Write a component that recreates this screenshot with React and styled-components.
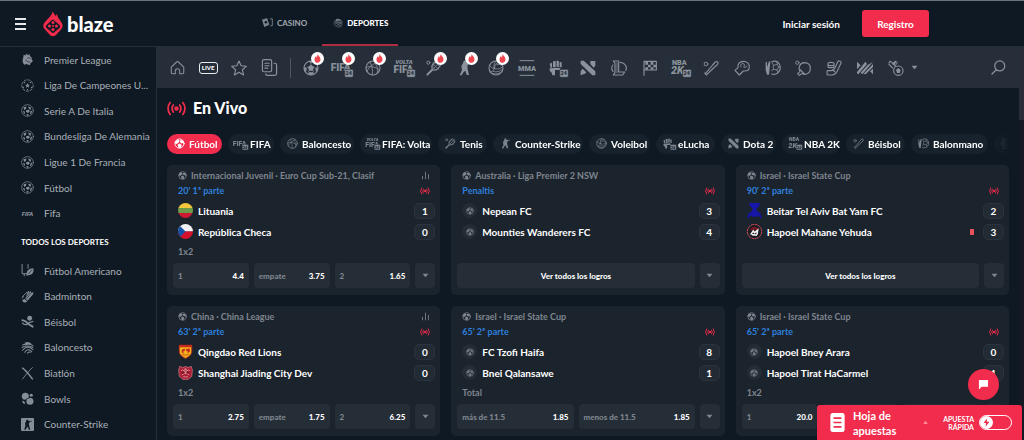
import React from "react";
import styled, { createGlobalStyle, css } from "styled-components";

const c = {
  bg: "#0f1923",
  bar: "#252e39",
  card: "#1b232d",
  tile: "#252d37",
  line: "#252f38",
  red: "#f12c4c",
  icon: "#8a929b",
  muted: "#7f868f",
  side: "#a9b0b8",
  blue: "#2f80dc",
};

const GlobalStyle = createGlobalStyle`
  *, *::before, *::after { box-sizing: border-box; }
  html, body { margin: 0; background: ${c.bg}; }
  body { font-family: Lato, "Open Sans", sans-serif; font-size: 10px; color: #fff; overflow: hidden; }
  button { font: inherit; color: inherit; border: 0; padding: 0; background: none; cursor: pointer; }
  a { color: inherit; text-decoration: none; }
  ul { list-style: none; margin: 0; padding: 0; }
  h1, h2, p { margin: 0; }
  svg { display: block; flex: none; overflow: visible; }
`;

/* ---------- icons ---------- */

const Icon = ({ name, size = 16, color }) => (
  <svg width={size} height={size} viewBox="0 0 24 24" fill="none" stroke="currentColor" strokeWidth="1.7"
    strokeLinecap="round" strokeLinejoin="round" style={color ? { color } : undefined} aria-hidden="true">
    {drawings[name]}
  </svg>
);

const F = { fill: "currentColor", stroke: "none" };
const glyph = { fill: "currentColor", stroke: "none", fontFamily: "Roboto, sans-serif", fontWeight: 900, textAnchor: "middle" };

const tag24 = (
  <>
    <rect x="16" y="14" width="13" height="12" rx="2" {...F} stroke="#252e39" strokeWidth="1" />
    <text x="22" y="23" {...glyph} fontSize="8" style={{ fill: "#252e39" }}>24</text>
  </>
);

const drawings = {
  home: <path d="M2 11.500 11 2.800q1-.9 2 0l9 8.700V20q0 2-2 2h-4.500v-4.500a3.500 3.500 0 0 0-7 0V22H4q-2 0-2-2z" />,
  star: <path d="m12 1.500 3.200 7.200 7.800.8-5.900 5.200 1.700 7.700L12 18.400l-6.800 4 1.700-7.700L1 9.500l7.800-.8z" />,
  copy: <><path d="M4 1h9q2 0 2 2v13q0 2-2 2H4q-2 0-2-2V3q0-2 2-2z" /><path d="M18.500 6h1q2.500 0 2.500 2.500V20q0 3-3 3H9q-2 0-2.500-1.800" /><path d="M5.500 6h6M5.500 9.500h6M5.500 13h4" /></>,
  soccer: <><circle cx="12" cy="12" r="10.500" /><path {...F} d="m12 7.200 4.600 3.400-1.700 5.400H9.100L7.400 10.600zM8 2.200l4 2.600 4-2.600-4-.9zM1.400 10l4 2-.4 5-2.500-.5zM22.600 10l-4 2 .4 5 2.500-.5zM8.500 21.900l-.3-3.600H12h3.800l-.3 3.600L12 22.700z" /><path strokeWidth="1" d="M12 7.200V4.800M16.600 10.600l2 1.400M14.900 16l1 2.300M9.100 16l-1 2.300M7.400 10.600l-2 1.400" /></>,
  ball: <><circle cx="12" cy="12" r="10" strokeWidth="2" /><path {...F} d="M2 8 8 3l4 2-1 4-5 4-4-1zM13 5l6 0 3 5-5 2-4-3zM8 14l5-2 4 4-2 5-5 1z" /></>,
  league: <><circle cx="12" cy="12" r="10.800" strokeWidth="1.300" /><path {...F} d="m5 6 5-1.500L9 9 5.500 11zM13 4.500l5 1.500.5 4.500L15 9zM10 11l5-.5 1 4-3.500 2L9 14zM3.500 13l3.500 1 .5 4-2-.5zM17.500 13.500l3-1.500-1 5-3 2zM10 18.500l4 .5-.5 2.500h-2.500z" /></>,
  premier: <><path {...F} d="m5 3 3 1.800L10 1l2.200 3L16 2l.3 3.600c3 1.400 4 3.800 3.700 7.400l2 1-2 3.500-2.500.5-1 4.500-6.500-2-4 1C3 18 2 14 4 9z" /><path stroke="#0f1923" strokeWidth="1.200" d="M12 9.500c2-1 3.500-.8 5 .5M9 13c1 3 4 4 7 3.500" /></>,
  champions: <><circle cx="12" cy="12" r="10.500" strokeWidth="1.500" strokeDasharray="4 3" /><path {...F} d="m12 7.500 1.300 3 3.200.2-2.400 2.200.8 3.300-2.900-1.700-2.900 1.700.8-3.300-2.400-2.200 3.200-.2zM5 5l3.500.5L6 8.500zM19 5l-3.500.5L18 8.500zM3 14l3 1-1.500 3zM21 14l-3 1 1.500 3zM10.500 18.500h3L12 21.500z" /></>,
  basket: <><circle cx="12" cy="12" r="10.500" /><path d="M7 3c3.500 5 5 12 4 19.500M18 3.500C10 7 4.500 12 3 17.500M1.500 11c7-2.500 15-1 20 4.500M15 5.500c4 4 5 9 3 14" strokeWidth="1.300" /></>,
  basketSolid: <><path {...F} d="M7 3q8-4 14 4-7-3-14 0z" /><g strokeWidth="1.900"><path d="M3 7.500c2-2 4-1 6-.5M2 12c6-4 13-3 20 0M3 17c5-7 12-7 19-1M7 21c2-6 8-7 13-1M12 22.500c1-2 3-2.500 5-1.500M10 6c5-.5 9 0 12 2.500" /></g></>,
  fifa: <><text x="10" y="17" {...glyph} fontSize="15">FIFA</text>{tag24}</>,
  volta: <><text x="12" y="6" {...glyph} fontSize="9" fontStyle="italic">VOLTA</text><text x="11" y="19" {...glyph} fontSize="15">FIFA</text>{tag24}</>,
  fifaSmall: <text x="12" y="16" {...glyph} fontSize="11" fontStyle="italic">FIFA</text>,
  tennis: <><circle cx="3.500" cy="4" r="2.300" strokeWidth="1.400" /><path d="M9.500 14.500C7 10 10 4 15 2.500c4-1 7 2 6 6-1.500 5-7 8-11.500 6z" /><path strokeWidth="1" d="m11 7 8 7M14 4l7 6M9 10l6 5M20 4 9.500 14.500M15.500 3 9 10M22 8l-7 7" /><path strokeWidth="3" d="m9 15-7 7" /></>,
  cs: <path {...F} d="M10 1h3.500l1 3.500L22 4v1.500h-4L15.500 9l.5 5 2 8.500h-3.500L12.500 16 10 18l-3 5H4l3.500-8-1-6L9 5z" />,
  volley: <><circle cx="12" cy="12" r="10.500" /><path strokeWidth="1.300" d="M12 1.500C9 5 8 9 9.500 12.500M17 3c-4 1-7 4-7.500 9M9.500 12.500C5 12 2.500 9.500 2 7.500M9.500 12.500c-1 4-4 6-6.500 5.500M9.500 12.500c4 2 9 1 13-2.500M8 17c5 2 10 0 13.500-3M6 20c5 2 9 1 12-1M13.500 7c3-1 6 0 8 1.500" /></>,
  mma: <><path strokeWidth="1.500" strokeLinecap="butt" d="M1 1h22M1 23h22" /><text x="12" y="16" {...glyph} fontSize="11">MMA</text></>,
  fist: <><path {...F} d="M1 5.500 4.500 4v7.500H2.500zM6 2l4-.5V11H6zM11.300 1l3.500.5V10h-3.500zM16 3l3 .5V11l-3-.5zM1 12.500l14-1 4 2.500-4 1H9v8H5l-1-4-3-3z" />{tag24}</>,
  dota: <path {...F} d="M1 1h4.500L23 17v6h-4.500L1 6zM1 17l3-4 5 5v2l-8 3zM15.500 1.500H23v7l-2.500 3-5-5.500z" />,
  lol: <><path d="M3.500 1.500h8v16.500h9L17.500 22.500h-14L6 18.500V5z" /><path d="M9 4v15" strokeWidth="1.200" /><path d="M14 3.500c5 .5 9 4 9 9 0 1.200-.3 2.300-.8 3.200M2.800 7.500C.5 11 .8 14.500 3 17" /></>,
  flag: <><path d="M3 23V2M3 2h18.500v13H3" /><path {...F} d="M5 3h4v4H5zM13 3h4v4h-4zM9 7h4v4H9zM17 7h4v4h-4zM5 11h4v3.500H5zM13 11h4v3.500h-4z" /></>,
  nba: <><text x="11" y="7.500" {...glyph} fontSize="11">NBA</text><text x="8" y="21" {...glyph} fontSize="16" fontStyle="italic">2K</text>{tag24}</>,
  bat: <><circle cx="4.500" cy="6" r="2.800" strokeWidth="1.400" /><path d="M4 20 14.500 7.500l4-4.500q2-1.500 3.500 0t0 3.500l-4.500 4L6 21.500M2.500 19.500l3 3" /></>,
  glove: <><path d="M1.500 15.500 6 11.500C5 6 8.500 2 14 2c5.500 0 9 3.500 9 8 0 4-3 6.500-7 6.500h-2L8 22.500z" /><path d="M10.500 10.500c-2-4 2-6.500 4.500-4.500q2 2-.5 4.500c2 1.500 4.500.5 5-1.500" strokeWidth="1.400" /></>,
  handball: <><path d="M10 3c7-4 13 2 13 8.500S17 23 10 21" /><path strokeWidth="1.200" d="m13 8 5-1.500 2.500 4-2.500 4.500-5-1zM13 8l-2-3M18 6.500l.5-4M20.500 10.500H23M18 15l1.500 4M13 14l-3 2" /><path {...F} d="M1 3.500 3 3v8l3-9 2 .5L6 22H3L1 15z" /></>,
  pingpong: <><circle cx="3.500" cy="4" r="2.500" strokeWidth="1.400" /><path d="M7.500 17.500C4 12 7 4.500 14 4c6 0 9 4 9 9 0 6-5 9-10 8.500L10.500 20l-4 3-2.500-2.500z" /><path d="M7.500 14 14 21" /></>,
  cricket: <><path d="M3 5c0-2 9-2 9 0v5c0 2-9 2-9 0zM3 7.500c2 1.200 7 1.200 9 0" /><path d="M20 1.500q3 .5 2.500 3l-5 11c-2 5-5 7-9 7H3q-2-.5-1.500-3.500L2 16h6c3 0 5-3 6-5l3.500-8q1-2 2.500-1.500zM10.500 15l3 3" /></>,
  masks: <path {...F} d="M0 2.500 5.500 8 0 14zM7.500 9 12.500 2.500 15 6 2 21.500 0 20v-2zM16 7.500 24 2.500 8 21.500 5.500 19zM24 6v4.500L13 21.500l-3-1zM24 13v8.500L19.500 17z" />,
  mixed: <><path d="m2 3 2-1 7 7M2 7l5 5M11 2 7 6M9 7l3-5" /><path d="m2 3-.5 4M14 3l-3 6" strokeWidth="1.300" /><circle cx="15.500" cy="16" r="7" /><path {...F} d="m15.500 12 3.500 3-1.500 4.500h-4L12 15z" /></>,
  search: <><circle cx="14" cy="9.500" r="8" strokeWidth="2" /><path strokeWidth="2" d="M8.500 15.500 1.500 22.500" /></>,
  bowls: <><circle cx="8" cy="8" r="6.500" {...F} /><circle cx="16.500" cy="17" r="6.500" {...F} /><circle cx="19" cy="6" r="3" {...F} /><path stroke="#0f1923" d="M4 17c3 3 4-4 8-5s5-3 9-3" strokeWidth="1.500" /><path {...F} d="m2 16 4 1 2 5-4-1z" /></>,
  american: <><path strokeWidth="1.800" d="M2 1v17h8M13 1v7" /><path {...F} d="M23 8c1 9-3 13-13 13.500C9.500 13 14 8.500 23 8z" /><path stroke="#0f1923" strokeWidth="1.200" d="m14 18 6-7" /><path d="M6 18v4" /></>,
  badminton: <><path {...F} d="M13 1.500 16 4l2-2.500L19 5l4-1-1 4.500L12 20l-4-4zM7 16.500l4.500 4.500c-2 2.500-6 2.500-8 .5s-1-4.500 3.500-5z" /><path stroke="#0f1923" strokeWidth="1" d="m10 17 9-12M8 15l8-10" /><path d="M3 12 11 4M2 15l3-3" /></>,
  baseball: <><circle cx="16" cy="6" r="4.500" {...F} /><path strokeWidth="3.500" d="M2.500 9.500c5 1 8 2.500 11 7l8 5" /><path d="M3 15c3 4 8 4 12-1l7-2" strokeWidth="2.400" /></>,
  biathlon: <><path strokeWidth="2.600" d="M3 2c7 5 11 11 18 20" /><path strokeWidth="1.600" d="M21 1C14 8 9 14 3 22" /></>,
  csBox: <><rect x="0" y="0" width="24" height="24" rx="2" {...F} /><path fill="#0f1923" stroke="none" d="M10 3h3l1 2.500 6-.5v1.500h-3L14.500 10l.5 4 2 7.500h-2.500L12.500 16l-2 2-2 3.500H6l2-7-.5-5L9.500 6z" /></>,
  cards: <><path {...F} d="m0 6 11-4 5 15-11 5z" /><circle cx="8.500" cy="11.500" r="2.800" fill="#0f1923" stroke="none" /><path d="M18 4h4.500v15h-3.500" strokeWidth="2" /></>,
  live: <><circle cx="12" cy="12" r="2.800" {...F} /><path strokeWidth="2.200" d="M8 7.500q-3 4.500 0 9M16 7.500q3 4.500 0 9M4 4.500Q-1.500 12 4 19.500M20 4.500q5.500 7.500 0 15" /></>,
  chart: <path strokeWidth="2.200" d="M4 14v7M12 3v18M20 9v12" />,
  caret: <path {...F} d="M2 6h20L12 18z" />,
  caretUp: <path {...F} d="M1 19h22L12 4z" />,
  flame: <path {...F} d="M11.500 0c1.500 4 8.500 7 8.500 14 0 5.500-3.500 9.500-8 9.500s-8-4-8-8.500c0-4 2-6.500 4-9.500 1 1.500 1.500 2.500 1.500 4.500C11 7 12.500 5 11.500 0z" />,
  chat: <path {...F} d="M2 2h20v15H8l-6 6z" />,
  bolt: <path {...F} d="M13.500 1 4 13.500h6.500L9.500 23 20 10h-7z" />,
  sheet: <><rect x="3" y="0" width="18" height="24" rx="3" {...F} /><path stroke="#f12c4c" strokeWidth="2" strokeLinecap="butt" d="M7 6.500h10M7 12h10M7 17.500h10" /></>,
};

const Crests = {
  lithuania: <><clipPath id="lt"><circle cx="12" cy="12" r="12" /></clipPath><g clipPath="url(#lt)"><path fill="#f4c83c" d="M0 0h24v8H0z" /><path fill="#6f9a48" d="M0 8h24v8H0z" /><path fill="#cf1831" d="M0 16h24v8H0z" /></g></>,
  czech: <><clipPath id="cz"><circle cx="12" cy="12" r="12" /></clipPath><g clipPath="url(#cz)"><path fill="#f2f2f4" d="M0 0h24v12H0z" /><path fill="#d3112b" d="M0 12h24v12H0z" /><path fill="#1450a4" d="M0 0l12 12L0 24z" /></g></>,
  qingdao: <><path fill="#f0b51c" stroke="#b3261e" strokeWidth="1.500" d="M2 2h20v9c0 6-4 9-10 12C6 20 2 17 2 11z" /><path fill="#c9281f" d="M2 1.500h20V5H2zM6 9l5-2v4l-3 1 2 4-4-3zM13 8l6-1v5l-4 3 1-3-3-1z" /><path stroke="#c9281f" d="M6 17c4 1 8 1 12-1" fill="none" /></>,
  shanghai: <><path fill="#a91d35" stroke="#d88a93" strokeWidth="1" d="m3 2 4 2q5-3 10 0l4-2 2 6-1 10-6 5H8l-6-5L1 8z" /><path fill="none" stroke="#e0a0a4" strokeWidth="1.300" d="M5 9q3-3 5 1M19 9q-3-3-5 1M6 16q6-5 12 0M8 19h8M11 6h2v6h-2z" /><path fill="#5f0f22" d="M7 11h3v2H7zM14 11h3v2h-3z" /></>,
  beitar: <path fill="#1616a8" d="M3 0h18l-2 5-4 4 1 4 5 3 3 8h-3l-3-5-2 3H8l-2-3-3 5H0l3-8 5-3 1-4-4-4z" />,
  hapoel: <><circle cx="12" cy="12" r="11.500" fill="none" stroke="#d84a50" strokeWidth="1.500" strokeDasharray="5 1" /><circle cx="12" cy="12" r="9" fill="#1b1b24" /><path fill="#7b1620" d="M4 9q8-9 16 0l-4 1-4-2-3 2z" /><path fill="none" stroke="#f3eeee" strokeWidth="2.600" d="m6 17 4-6 2 3 5-4-1 7M8 17l8 1" /></>,
};

/* ---------- shell ---------- */

const Shell = styled.div`
  display: flex; flex-direction: column; height: 100vh; overflow: hidden;
`;
const Header = styled.header`
  display: flex; align-items: stretch; flex: none; height: 47px;
  padding: 0 95px 0 15px; border-top: 1px solid #6d747c; border-bottom: 1px solid ${c.line};
`;
const MenuButton = styled.button`
  align-self: center; display: grid; gap: 3px; width: 11px; margin-right: 17px;
  span { height: 2px; background: #e6e9ec; }
`;
const Logo = styled.a`
  display: flex; align-items: center; gap: 4px; width: 208px;
  font-size: 20px; line-height: 24px; font-weight: 900;
`;
const MainTabs = styled.nav`
  display: flex; gap: 5px; flex: 1;
`;
const MainTab = styled.a`
  display: flex; align-items: center; gap: 4px; padding: 0 10px 0 11px;
  font-size: 8px; font-weight: ${(p) => (p.$active ? 900 : 700)}; color: ${(p) => (p.$active ? "#fff" : "#a3a9b1")};
  border-bottom: 2px solid ${(p) => (p.$active ? "#ad2c43" : "transparent")};
  svg { color: #7a828b; }
`;
const Account = styled.div`
  display: flex; align-items: center; gap: 22px; font-weight: 700;
`;
const Register = styled.button`
  width: 67px; height: 27px; border-radius: 3px; background: ${c.red};
`;
const Body = styled.div`
  display: flex; flex: 1; min-height: 0;
`;
const Side = styled.aside`
  flex: none; width: 157px; border-right: 1px solid ${c.line}; overflow: hidden;
`;
const SideList = styled.ul`
  display: grid; grid-template-columns: minmax(0, 1fr); grid-auto-rows: 1fr; height: 179px;
`;
const SideLink = styled.a`
  display: flex; align-items: center; gap: 10px; height: 100%; padding: 0 5px 0 21px;
  color: ${c.side}; white-space: nowrap;
  svg { color: #858d97; }
`;
const SideTitle = styled.h2`
  padding-left: 21px; font-size: 8px; line-height: 32px; font-weight: 700;
`;
const Main = styled.main`
  flex: 1; min-width: 0; overflow: hidden;
`;
const Scroll = styled.div`
  flex: none; width: 5px; background: #151823;
  &::before { content: ""; display: block; height: 73px; background: #2a2c38; }
`;

const Toolbar = styled.nav`
  display: flex; align-items: center; height: 41px; padding: 0 12px 0 5px;
  background: ${c.bar}; color: ${c.icon};
`;
const ToolGroup = styled.div`
  display: flex; flex: ${(p) => p.$share} 1 0; max-width: ${(p) => p.$max};
`;
const Tool = styled.button`
  position: relative; flex: 1; display: grid; place-items: center; height: 41px;
`;
const Hot = styled.span`
  position: absolute; top: 5px; left: 50%; display: grid; place-items: center;
  width: 13px; height: 13px; border-radius: 50%; background: #fff; color: #ef4650;
`;
const Divider = styled.i`
  width: 1px; height: 20px; margin: 0 5px; background: #4e5761;
`;
const LiveTag = styled.span`
  width: 19px; height: 12px; border: 1px solid #e9ecef; border-radius: 3px;
  font-size: 6px; line-height: 10px; font-weight: 900; color: #fff; text-align: center;
`;
const SearchButton = styled.button`
  margin-left: auto; width: 18px; display: grid; place-items: center;
`;

const Content = styled.div`
  padding: 8px 10px 0;
`;
const Title = styled.h1`
  display: flex; align-items: center; gap: 7px; height: 24px;
  font-size: 16px; line-height: 24px; font-weight: 900;
  svg { color: ${c.red}; }
`;
const Pills = styled.div`
  display: flex; gap: 6px; margin: 14px 0 11px; overflow: hidden;
  mask-image: linear-gradient(to right, #000 calc(100% - 24px), transparent);
`;
const Pill = styled.button`
  flex: none; display: flex; align-items: center; gap: 4px; width: ${(p) => p.$w}px; height: 20px;
  padding: 0 0 1px 7px; border-radius: 10px; font-weight: 700; white-space: nowrap;
  background: ${(p) => (p.$active ? c.red : "#18222c")};
  svg { color: ${(p) => (p.$active ? "#fff" : "#7b838d")}; }
`;

const Cards = styled.div`
  display: grid; grid-template-columns: repeat(3, minmax(0, 1fr)); gap: 11px;
`;
const Card = styled.article`
  padding: 3px 5px 7px 6px; border-radius: 5px; background: ${c.card};
`;
const MetaRow = styled.div`
  display: flex; align-items: center; height: 15px; padding: 0 5px; white-space: nowrap;
  color: ${c.muted}; font-size: 9px; font-weight: 700;
  > svg:last-child:not(:first-child) { margin-left: auto; }
`;
const League = styled.span`
  display: flex; align-items: center; gap: 4px;
`;
const Clock = styled.span`
  color: ${c.blue};
`;
const Teams = styled.div`
  margin-top: 2px;
`;
const Team = styled.div`
  display: flex; align-items: center; height: 21px; padding-left: 5px; gap: 5px; font-weight: 700;
`;
const NoCrest = styled.span`
  display: grid; place-items: center; width: 15px; height: 15px; border-radius: 50%;
  background: #242d36; color: #727a83;
`;
const RedCard = styled.i`
  width: 4px; height: 6px; margin-right: 4px; background: #e5525c;
`;
const TeamName = styled.span`
  flex: 1;
`;
const Score = styled.span`
  width: 21px; height: 16px; border: 1px solid #2b343e; border-radius: 5px; background: #222b34;
  line-height: 14px; text-align: center;
`;
const Market = styled.p`
  height: 21px; padding-left: 5px; font-size: 9px; line-height: 20px; font-weight: 700; color: ${c.muted};
`;
const Odds = styled.div`
  display: flex; gap: 5px;
`;
const tile = css`
  height: 25px; border-radius: 4px; background: ${c.tile};
`;
const Odd = styled.button`
  ${tile} flex: 1; display: flex; align-items: center; justify-content: space-between; padding: 0 5px;
  font-size: 8px; font-weight: 900;
  span { color: ${c.muted}; }
`;
const AllOdds = styled.button`
  ${tile} flex: 1; font-size: 8px; font-weight: 900;
`;
const More = styled.button`
  ${tile} width: 20px; display: grid; place-items: center; color: #80878f;
`;

const ChatButton = styled.button`
  position: fixed; right: 25px; bottom: 40px; width: 31px; height: 31px; border-radius: 50%;
  display: grid; place-items: center; background: ${c.red};
`;
const Slip = styled.section`
  position: fixed; right: 2px; bottom: 0; width: 205px; height: 35px; padding: 0 10px 0 11px;
  display: flex; align-items: center; border-radius: 3px 3px 0 0; background: ${c.red};
`;
const SlipOpen = styled.button`
  display: flex; align-items: center; flex: 1; gap: 6px; padding-right: 15px;
  font-size: 11px; line-height: 15px; font-weight: 700; text-align: left;
  span { flex: 1; padding-top: 1px; }
`;
const Quick = styled.label`
  display: flex; align-items: center; gap: 5px;
  font-size: 7px; line-height: 8px; font-weight: 700; text-align: right;
`;
const Switch = styled.span`
  position: relative; display: block; height: 15px;
  input {
    appearance: none; display: block; width: 33px; height: 15px; margin: 0;
    border: 1px solid #fff; border-radius: 8px;
  }
  input::before { content: ""; display: block; width: 13px; height: 13px; border-radius: 50%; background: #fff; }
  svg { position: absolute; top: 3px; left: 3px; color: ${c.red}; pointer-events: none; }
`;

/* ---------- data ---------- */

const leagues = [
  ["premier", "Premier League"], ["champions", "Liga De Campeones U..."], ["league", "Serie A De Italia"],
  ["league", "Bundesliga De Alemania"], ["league", "Ligue 1 De Francia"], ["league", "Fútbol"], ["fifaSmall", "Fifa"],
];
const sports = [
  ["american", "Fútbol Americano"], ["badminton", "Badminton"], ["baseball", "Béisbol"],
  ["basketSolid", "Baloncesto"], ["biathlon", "Biatlón"], ["bowls", "Bowls"], ["csBox", "Counter-Strike"],
];
const tools = [
  ["soccer", "Fútbol", 1], ["fifa", "FIFA", 1], ["basket", "Baloncesto", 1], ["volta", "FIFA: Volta"], ["tennis", "Tenis", 1],
  ["cs", "Counter-Strike", 1], ["volley", "Voleibol", 1], ["mma", "MMA"], ["fist", "eLucha"], ["dota", "Dota 2"],
  ["lol", "League of Legends"], ["flag", "Carreras"], ["nba", "NBA 2K"], ["bat", "Béisbol"], ["glove", "Boxeo"],
  ["handball", "Balonmano"], ["pingpong", "Tenis de mesa"], ["cricket", "Hockey"], ["masks", "Rugby"], ["mixed", "Otros"],
];
const pills = [
  ["ball", "Fútbol", 55], ["fifa", "FIFA", 46], ["basket", "Baloncesto", 74], ["volta", "FIFA: Volta", 72],
  ["tennis", "Tenis", 49], ["cs", "Counter-Strike", 90], ["volley", "Voleibol", 61], ["fist", "eLucha", 59],
  ["dota", "Dota 2", 55], ["nba", "NBA 2K", 58], ["bat", "Béisbol", 59], ["handball", "Balonmano", 77], ["lol", "", 32],
];
const three = (a, b, d) => [["1", a], ["empate", b], ["2", d]];
const matches = [
  { league: "Internacional Juvenil · Euro Cup Sub-21, Clasif", stats: true, clock: "20' 1ª parte", market: "1x2",
    teams: [["Lituania", 1, "lithuania"], ["República Checa", 0, "czech"]], odds: three("4.4", "3.75", "1.65") },
  { league: "Australia · Liga Premier 2 NSW", clock: "Penaltis", teams: [["Nepean FC", 3], ["Mounties Wanderers FC", 4]] },
  { league: "Israel · Israel State Cup", clock: "90' 2ª parte",
    teams: [["Beitar Tel Aviv Bat Yam FC", 2, "beitar"], ["Hapoel Mahane Yehuda", 3, "hapoel", true]] },
  { league: "China · China League", stats: true, clock: "63' 2ª parte", market: "1x2",
    teams: [["Qingdao Red Lions", 0, "qingdao"], ["Shanghai Jiading City Dev", 0, "shanghai"]], odds: three("2.75", "1.75", "6.25") },
  { league: "Israel · Israel State Cup", clock: "65' 2ª parte", market: "Total",
    teams: [["FC Tzofi Haifa", 8], ["Bnei Qalansawe", 1]], odds: [["más de 11.5", "1.85"], ["menos de 11.5", "1.85"]] },
  { league: "Israel · Israel State Cup", clock: "65' 2ª parte", market: "1x2",
    teams: [["Hapoel Bney Arara", 0], ["Hapoel Tirat HaCarmel", 1]], odds: [["1", "20.0"], ["", ""], ["", ""]] },
];

const SideItems = ({ items }) => (
  <SideList>
    {items.map(([icon, label]) => (
      <li key={label}><SideLink href="#"><Icon name={icon} size={13} /><span>{label}</span></SideLink></li>
    ))}
  </SideList>
);

const Match = ({ m }) => (
  <Card>
    <MetaRow>
      <League><Icon name="ball" size={9} />{m.league}</League>
      {m.stats && <Icon name="chart" size={9} />}
    </MetaRow>
    <MetaRow><Clock>{m.clock}</Clock><Icon name="live" size={10} color={c.red} /></MetaRow>
    <Teams>
      {m.teams.map(([name, score, crest, red]) => (
        <Team key={name}>
          {crest ? <svg width="15" height="15" viewBox="0 0 24 24" aria-hidden="true">{Crests[crest]}</svg>
            : <NoCrest><Icon name="ball" size={8} /></NoCrest>}
          <TeamName>{name}</TeamName>
          {red && <RedCard />}
          <Score>{score}</Score>
        </Team>
      ))}
    </Teams>
    <Market>{m.market}</Market>
    <Odds>
      {m.odds ? m.odds.map(([l, v], i) => <Odd key={i}><span>{l}</span>{v}</Odd>) : <AllOdds>Ver todos los logros</AllOdds>}
      <More aria-label="Más"><Icon name="caret" size={7} /></More>
    </Odds>
  </Card>
);

export default function App() {
  return (
    <Shell>
      <GlobalStyle />
      <Header>
        <MenuButton aria-label="Menú"><span /><span /><span /></MenuButton>
        <Logo href="#">
          <svg width="20" height="26" viewBox="0 0 40 52" aria-hidden="true">
            <path fill="#f12c4c" d="M19 1c2 4 5 6 6 9l3-4c1 6 3 9 7 14 6 8 5 12 1 17L26 48q-6 5-12 0L3 36c-4-5-3-9 2-15C11 14 18 9 19 1z" />
            <path fill="#0f1923" d="m20 17 13 11q3 3 0 6L22 43q-2 2-4 0L7 34q-3-3 0-6l11-10z" />
            <g fill="#f12c4c"><circle cx="20" cy="23" r="3" /><circle cx="13" cy="30" r="3" /><circle cx="27" cy="30" r="3" /><circle cx="20" cy="37" r="3" /><circle cx="20" cy="30" r="2" /></g>
          </svg>
          blaze
        </Logo>
        <MainTabs>
          <MainTab href="#"><Icon name="cards" size={11} />CASINO</MainTab>
          <MainTab href="#" $active><Icon name="basketSolid" size={10} />DEPORTES</MainTab>
        </MainTabs>
        <Account>
          <a href="#">Iniciar sesión</a>
          <Register>Registro</Register>
        </Account>
      </Header>
      <Body>
        <Side>
          <SideItems items={leagues} />
          <SideTitle>TODOS LOS DEPORTES</SideTitle>
          <SideItems items={sports} />
        </Side>
        <Main>
          <Toolbar>
            <ToolGroup $share={4} $max="123px">
              <Tool aria-label="Inicio"><Icon name="home" size={15} /></Tool>
              <Tool><LiveTag>LIVE</LiveTag></Tool>
              <Tool aria-label="Favoritos"><Icon name="star" size={16} /></Tool>
              <Tool aria-label="Mis apuestas"><Icon name="copy" size={17} /></Tool>
            </ToolGroup>
            <Divider />
            <ToolGroup $share={20} $max="615px">
              {tools.map(([icon, label, hot]) => (
                <Tool key={icon} aria-label={label}>
                  <Icon name={icon} size={16} />
                  {hot && <Hot><Icon name="flame" size={9} /></Hot>}
                </Tool>
              ))}
            </ToolGroup>
            <Icon name="caret" size={7} />
            <SearchButton aria-label="Buscar"><Icon name="search" size={15} /></SearchButton>
          </Toolbar>
          <Content>
            <Title><Icon name="live" size={19} />En Vivo</Title>
            <Pills>
              {pills.map(([icon, label, w], i) => (
                <Pill key={icon} $w={w} $active={i === 0}><Icon name={icon} size={11} />{label}</Pill>
              ))}
            </Pills>
            <Cards>{matches.map((m, i) => <Match key={i} m={m} />)}</Cards>
          </Content>
        </Main>
        <Scroll />
      </Body>
      <ChatButton aria-label="Chat"><Icon name="chat" size={11} /></ChatButton>
      <Slip>
        <SlipOpen><Icon name="sheet" size={19} /><span>Hoja de<br />apuestas</span><Icon name="caretUp" size={5} color="#ff8c9d" /></SlipOpen>
        <Quick>
          <span>APUESTA<br />RÁPIDA</span>
          <Switch><input type="checkbox" /><Icon name="bolt" size={9} /></Switch>
        </Quick>
      </Slip>
    </Shell>
  );
}
